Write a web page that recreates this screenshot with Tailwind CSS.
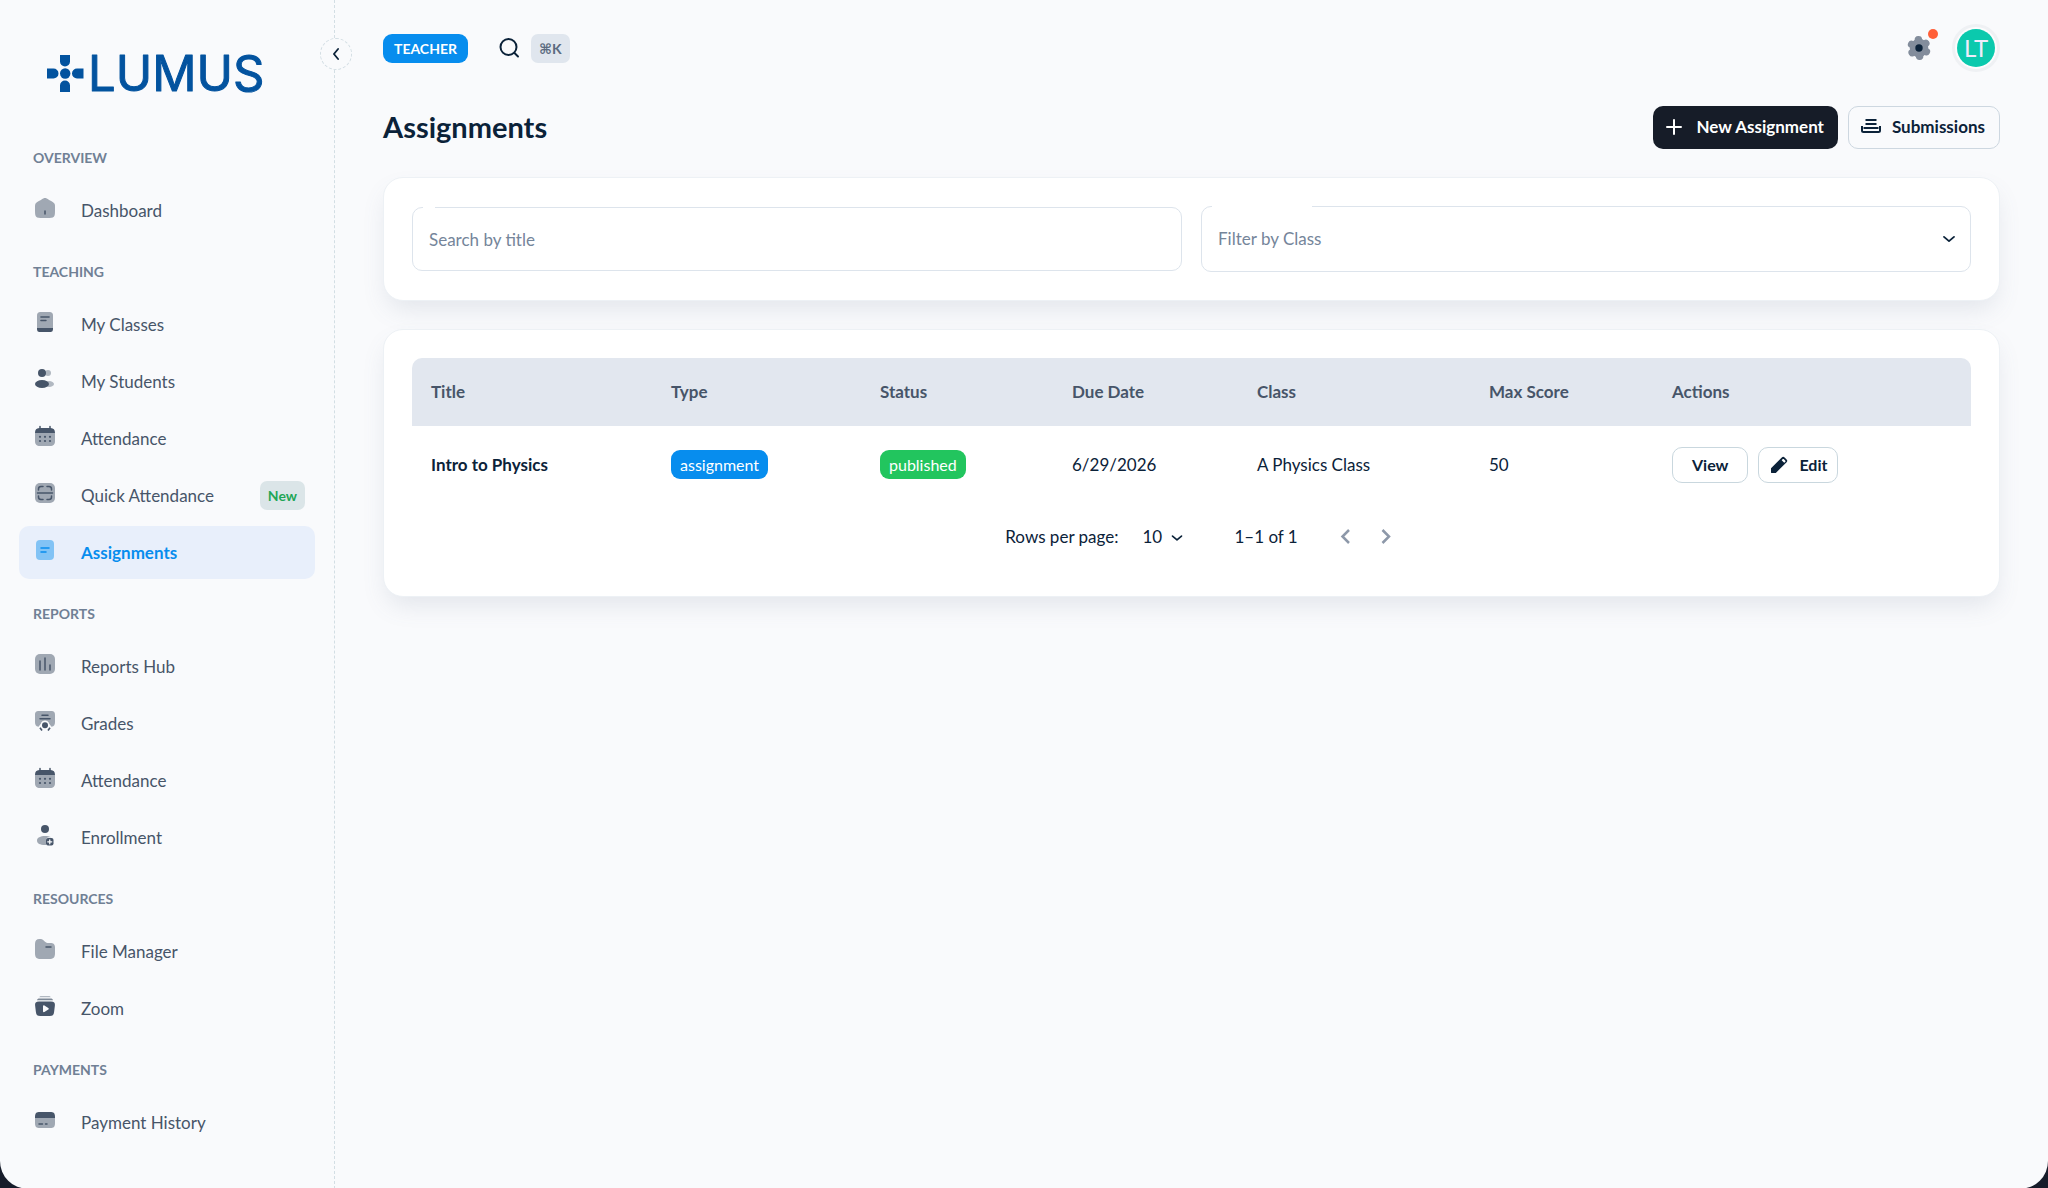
<!DOCTYPE html>
<html lang="en">

<head>
  <meta charset="UTF-8">
  <meta name="viewport" content="width=device-width, initial-scale=1.0">
  <title>Assignments | Lumus</title>
  <script src="https://cdn.jsdelivr.net/npm/@tailwindcss/browser@4"></script>
</head>

<body class="bg-[#161c2a] font-[Lato,sans-serif] text-[17px] leading-6 text-[#0b2239]">
  <!-- shared icon shapes -->
  <svg class="hidden">
    <symbol id="i-calendar" viewBox="0 0 24 24">
      <path d="M2 9h20v8c0 3.500-1.500 5-5 5H7c-3.500 0-5-1.500-5-5z" opacity=".5" />
      <path d="M7 1.700a.75.75 0 0 1 .75.75V4h8.500V2.450a.75.75 0 0 1 1.500 0v1.600C20.600 4.300 22 5.800 22 9H2c0-3.200 1.400-4.700 4.250-4.950v-1.600A.75.75 0 0 1 7 1.700z" />
      <circle cx="7" cy="12.800" r="1.100" /><circle cx="12" cy="12.800" r="1.100" /><circle cx="17" cy="12.800" r="1.100" />
      <circle cx="7" cy="17" r="1.100" /><circle cx="12" cy="17" r="1.100" /><circle cx="17" cy="17" r="1.100" />
    </symbol>
    <symbol id="i-chevron" viewBox="0 0 24 24">
      <path d="M6 9.500l6 5 6-5" fill="none" stroke="currentColor" stroke-width="2.200" stroke-linecap="round" stroke-linejoin="round" />
    </symbol>
  </svg>

  <div class="flex min-h-screen rounded-b-[28px] bg-[#f9fafc]">
    <aside class="relative w-[335px] shrink-0 border-r border-dashed border-[#d3dee4]">
      <button aria-label="Collapse menu"
        class="absolute top-[38px] -right-[18px] flex size-8 items-center justify-center rounded-full border border-dashed border-[#d3dee4] bg-[#f9fafc]">
        <svg class="size-5 rotate-90"><use href="#i-chevron" /></svg>
      </button>

      <a href="#" class="flex h-[123px] items-center pt-6 pl-[46px]" aria-label="Lumus">
        <svg class="h-[70px] w-[240px] overflow-visible" viewBox="0 -10 240 70" fill="#03539f">
          <path d="M14 6h10v6.500a5 5 0 0 1-10 0zM14 43h10v-6.500a5 5 0 0 0-10 0zM1 19.500v10h6.500a5 5 0 0 0 0-10zM37.500 19.500v10H31a5 5 0 0 1 0-10z" />
          <circle cx="19.200" cy="24.500" r="5.200" />
          <text x="42" y="42" font-family="Inter" font-size="49" stroke="#03539f" stroke-width="1" stroke-linejoin="round">LUMUS</text>
        </svg>
      </a>

      <nav class="px-[19px] pb-10 text-[#475569]">
        <h2 class="px-[14px] pt-[25px] pb-4 text-sm leading-5 font-bold text-[#708095]">OVERVIEW</h2>
        <ul class="space-y-1">
          <li><a href="#" class="flex h-[53px] items-center gap-6 rounded-[10px] px-[14px]">
            <span class="pb-[6px]"><svg class="size-6" viewBox="0 0 24 24" fill="currentColor">
              <path d="M2 12.200c0-2.300 0-3.400.5-4.400s1.500-1.500 3.400-2.700l2-1.200C9.900 2.600 10.900 2 12 2s2.100.6 4.100 1.900l2 1.200c1.900 1.200 2.800 1.700 3.400 2.700s.5 2.100.5 4.400v1.500c0 3.900 0 5.900-1.200 7.100S17.800 22 14 22h-4c-3.800 0-5.700 0-6.800-1.200S2 17.600 2 13.700z" opacity=".5" />
              <rect x="11.250" y="14.200" width="1.500" height="4.600" rx=".75" />
            </svg></span>Dashboard</a></li>
        </ul>

        <h2 class="px-[14px] pt-[25px] pb-4 text-sm leading-5 font-bold text-[#708095]">TEACHING</h2>
        <ul class="space-y-1">
          <li><a href="#" class="flex h-[53px] items-center gap-6 rounded-[10px] px-[14px]">
            <span class="pb-[6px]"><svg class="size-6" viewBox="0 0 24 24" fill="currentColor">
              <path d="M4 6c0-3 1-4 4-4h8c3 0 4 1 4 4v12H4z" opacity=".5" />
              <path d="M4 18h16c0 3-.5 4-3 4H7c-2.500 0-3-1-3-4z" />
              <rect x="7.200" y="6.250" width="9.600" height="1.500" rx=".75" /><rect x="7.200" y="9.750" width="6.500" height="1.500" rx=".75" />
            </svg></span>My Classes</a></li>
          <li><a href="#" class="flex h-[53px] items-center gap-6 rounded-[10px] px-[14px]">
            <span class="pb-[6px]"><svg class="size-6" viewBox="0 0 24 24" fill="currentColor">
              <circle cx="15" cy="6" r="3" opacity=".4" />
              <ellipse cx="16" cy="17" rx="5" ry="3" opacity=".4" />
              <circle cx="9" cy="6" r="4" /><ellipse cx="9" cy="17" rx="7" ry="4" />
            </svg></span>My Students</a></li>
          <li><a href="#" class="flex h-[53px] items-center gap-6 rounded-[10px] px-[14px]">
            <span class="pb-[6px]"><svg class="size-6" fill="currentColor"><use href="#i-calendar" /></svg></span>Attendance</a></li>
          <li><a href="#" class="flex h-[53px] items-center gap-6 rounded-[10px] pr-[10px] pl-[14px]">
            <span class="pb-[6px]"><svg class="size-6" viewBox="0 0 24 24" fill="currentColor">
              <rect x="2" y="2" width="20" height="20" rx="5" opacity=".5" />
              <path d="M4.500 12h15M10 5.500H8C6.300 5.500 5.500 6.300 5.500 8v1M14 5.500h2c1.700 0 2.500.8 2.500 2.500v1M10 18.500H8c-1.700 0-2.500-.8-2.500-2.500v-1M14 18.500h2c1.700 0 2.500-.8 2.500-2.500v-1" fill="none" stroke="currentColor" stroke-width="1.500" stroke-linecap="round" />
            </svg></span>Quick Attendance
            <span class="ml-auto rounded-[7px] bg-[#dbe5e8] px-2 py-[5px] text-sm leading-[19px] font-bold text-[#1fa657]">New</span></a></li>
          <li><a href="#" aria-current="page" class="flex h-[53px] items-center gap-6 rounded-[10px] bg-[#e8effb] px-[14px] font-bold text-[#078dee]">
            <span class="pb-[6px]"><svg class="size-6" viewBox="0 0 24 24" fill="currentColor">
              <rect x="3" y="2" width="18" height="20" rx="4" opacity=".45" />
              <rect x="7.250" y="9.250" width="9.500" height="1.500" rx=".75" /><rect x="7.250" y="13.250" width="6.500" height="1.500" rx=".75" />
            </svg></span>Assignments</a></li>
        </ul>

        <h2 class="px-[14px] pt-[25px] pb-4 text-sm leading-5 font-bold text-[#708095]">REPORTS</h2>
        <ul class="space-y-1">
          <li><a href="#" class="flex h-[53px] items-center gap-6 rounded-[10px] px-[14px]">
            <span class="pb-[6px]"><svg class="size-6" viewBox="0 0 24 24" fill="currentColor">
              <rect x="2" y="2" width="20" height="20" rx="5" opacity=".5" />
              <rect x="6.250" y="8.250" width="1.500" height="10.500" rx=".75" /><rect x="11.250" y="5.250" width="1.500" height="13.500" rx=".75" /><rect x="16.250" y="12.250" width="1.500" height="6.500" rx=".75" />
            </svg></span>Reports Hub</a></li>
          <li><a href="#" class="flex h-[53px] items-center gap-6 rounded-[10px] px-[14px]">
            <span class="pb-[6px]"><svg class="size-6" viewBox="0 0 24 24" fill="currentColor">
              <path d="M6 2h12c3 0 4 1 4 4v7c0 2.700-.8 4.500-3.500 4.800L16 14.500a4.200 4.200 0 0 0-8 0l-2.500 3.300C2.800 17.500 2 15.700 2 13V6c0-3 1-4 4-4z" opacity=".5" />
              <rect x="8.250" y="5.500" width="7.500" height="1.500" rx=".75" /><rect x="6.250" y="9" width="11.500" height="1.500" rx=".75" />
              <circle cx="12" cy="16.200" r="4.200" fill="#f9fafc" /><circle cx="12" cy="16.200" r="3" />
              <path d="M7 18.800l2 2.600M17 18.800l-2 2.600" stroke="currentColor" stroke-width="1.700" />
            </svg></span>Grades</a></li>
          <li><a href="#" class="flex h-[53px] items-center gap-6 rounded-[10px] px-[14px]">
            <span class="pb-[6px]"><svg class="size-6" fill="currentColor"><use href="#i-calendar" /></svg></span>Attendance</a></li>
          <li><a href="#" class="flex h-[53px] items-center gap-6 rounded-[10px] px-[14px]">
            <span class="pb-[6px]"><svg class="size-6" viewBox="0 0 24 24" fill="currentColor">
              <circle cx="12" cy="6" r="4" />
              <path d="M13 22h-1c-5 0-8-1.500-8-4.500S7.500 13 12 13c2.500 0 4.700.4 6.200 1.300H16c-2 0-3 1-3 3z" opacity=".5" />
              <rect x="13" y="15" width="7.500" height="7.500" rx="2" />
              <path d="M16.750 16.800v4M14.750 18.800h4" stroke="#f9fafc" stroke-width="1.300" stroke-linecap="round" />
            </svg></span>Enrollment</a></li>
        </ul>

        <h2 class="px-[14px] pt-[25px] pb-4 text-sm leading-5 font-bold text-[#708095]">RESOURCES</h2>
        <ul class="space-y-1">
          <li><a href="#" class="flex h-[53px] items-center gap-6 rounded-[10px] px-[14px]">
            <span class="pb-[6px]"><svg class="size-6" viewBox="0 0 24 24" fill="currentColor">
              <path d="M2 7c0-3.500 1.500-5 4.500-5 2 0 3 .4 4.200 1.500l1.300 1.200C13 5.600 14 6 15.500 6H17c3.500 0 5 1.200 5 4.500V16c0 4.500-1.500 6-6 6H8c-4.500 0-6-1.500-6-6z" opacity=".5" />
              <rect x="12.250" y="9.250" width="6.500" height="1.500" rx=".75" />
            </svg></span>File Manager</a></li>
          <li><a href="#" class="flex h-[53px] items-center gap-6 rounded-[10px] px-[14px]">
            <span class="pb-[6px]"><svg class="size-6" viewBox="0 0 24 24" fill="currentColor">
              <path d="M8.500 2h7c1.300 0 2 .4 2.200 1.300H6.300C6.500 2.400 7.200 2 8.500 2z" opacity=".4" />
              <path d="M6.500 4.500h11c1.500 0 2.300.7 2.500 1.700H4c.2-1 1-1.700 2.500-1.700z" opacity=".7" />
              <path fill-rule="evenodd" d="M6 7.500h12c3 0 4.300 1.200 3.900 4l-.8 6.500c-.4 3-1.500 4-4.300 4H7.200c-2.800 0-3.900-1-4.300-4l-.8-6.500c-.4-2.800.9-4 3.900-4zm4 4.700v5c0 .8.700 1.200 1.400.8l3.900-2.400c.7-.4.7-1.300 0-1.700l-3.900-2.500c-.7-.4-1.400 0-1.400.8z" />
            </svg></span>Zoom</a></li>
        </ul>

        <h2 class="px-[14px] pt-[25px] pb-4 text-sm leading-5 font-bold text-[#708095]">PAYMENTS</h2>
        <ul class="space-y-1">
          <li><a href="#" class="flex h-[53px] items-center gap-6 rounded-[10px] px-[14px]">
            <span class="pb-[6px]"><svg class="size-6" viewBox="0 0 24 24" fill="currentColor">
              <path d="M2 10h20v5c0 3.700-1.200 5-5 5H7c-3.800 0-5-1.300-5-5z" opacity=".5" />
              <path d="M7 4h10c3.800 0 5 1.300 5 5v1H2V9c0-3.700 1.200-5 5-5z" />
              <rect x="5.250" y="15.250" width="5" height="1.500" rx=".75" /><rect x="11.750" y="15.250" width="3" height="1.500" rx=".75" />
            </svg></span>Payment History</a></li>
        </ul>
      </nav>
    </aside>

    <main class="min-w-0 flex-1 px-12">
      <header class="flex h-24 items-center">
        <span class="rounded-[9px] bg-[#078dee] px-[11px] py-[5px] text-sm leading-[19px] font-bold text-white">TEACHER</span>
        <button class="ml-[29px] flex items-center gap-[10px]" aria-label="Search">
          <svg class="size-6" viewBox="0 0 24 24" fill="none" stroke="currentColor" stroke-width="2" stroke-linecap="round">
            <circle cx="11.500" cy="11" r="8" /><path d="M17.500 17l3.500 3.500" />
          </svg>
          <kbd class="rounded-[7px] bg-[#e0e6ee] px-2 py-[5px] font-[Lato,'DejaVu_Sans',sans-serif] text-sm leading-[19px] font-bold text-[#5b6b80]">⌘K</kbd>
        </button>
        <button class="relative ml-auto size-8" aria-label="Settings">
          <svg class="size-8" viewBox="0 0 32 32">
            <g fill="#838d9c" stroke="#838d9c" stroke-width="7.500" stroke-linecap="round" transform="rotate(-4 16 16)">
              <circle cx="16" cy="16" r="5.500" />
              <path d="M16 7.800v16.400M8.900 11.900l14.200 8.200M8.900 20.100l14.200-8.200" />
            </g>
            <circle cx="16" cy="16" r="3.700" fill="#0b2239" />
          </svg>
          <span class="absolute -top-[3px] -right-[3px] size-[10px] rounded-full bg-[#ff5f38]"></span>
        </button>
        <button class="ml-[17px] rounded-full border-3 border-[#eff1f4] bg-[#fcfcfd] p-[2px]" aria-label="Account">
          <span class="flex size-[38px] items-center justify-center rounded-full bg-[#0bc9ad] text-[24px] text-[#eeecfb]">LT</span>
        </button>
      </header>

      <div class="flex items-center gap-[10px] pt-[9px] pb-7">
        <h1 class="mr-auto text-[29px] leading-[44px] font-bold">Assignments</h1>
        <a href="#" class="flex h-[43px] items-center gap-3 rounded-[10px] bg-[#161c28] pr-[14px] pl-[10px] font-bold text-white">
          <svg class="size-[22px]" viewBox="0 0 22 22" stroke="currentColor" stroke-width="2" stroke-linecap="round"><path d="M11 4v14M4 11h14" /></svg>
          New Assignment
        </a>
        <a href="#" class="flex h-[43px] items-center gap-[10px] rounded-[10px] border border-[#cdd7e0] pr-[14px] pl-[11px] font-bold">
          <svg class="size-[22px]" viewBox="0 0 22 22" fill="none" stroke="currentColor" stroke-width="2"><path d="M5.500 4h11M5.500 8h11M3.500 12h15M2 10v4.500c0 1 .5 1.500 1.500 1.500h15c1 0 1.500-.5 1.500-1.500V10" /></svg>
          Submissions
        </a>
      </div>

      <section class="grid grid-cols-2 items-center gap-[19px] rounded-[20px] border border-[#edf1f5] bg-white p-7 shadow-[0_12px_24px_-4px_rgba(100,116,139,0.15)]">
        <div class="relative">
          <input id="title" type="text" class="block h-16 w-full rounded-[10px] border border-[#dde4ec] px-4 outline-none">
          <label for="title" class="absolute top-[21px] left-[17px] text-[#75859a]">Search by title</label>
          <span class="absolute top-0 left-[11px] h-px w-3 bg-white"></span>
        </div>
        <div class="relative">
          <select id="class" class="block h-[66px] w-full appearance-none rounded-[10px] border border-[#dde4ec] px-4 outline-none">
            <option value=""></option>
          </select>
          <label for="class" class="absolute top-[21px] left-[17px] text-[#75859a]">Filter by Class</label>
          <span class="absolute top-0 left-[11px] h-px w-[100px] bg-white"></span>
          <svg class="pointer-events-none absolute top-[23px] right-3 size-5"><use href="#i-chevron" /></svg>
        </div>
      </section>

      <section class="mt-7 rounded-[20px] border border-[#edf1f5] bg-white px-7 pt-7 pb-[25px] shadow-[0_12px_24px_-4px_rgba(100,116,139,0.15)]">
        <table class="w-full table-fixed text-left">
          <thead class="text-[#475569]">
            <tr class="h-[68px] *:bg-[#e2e7ef] *:px-[19px] *:font-bold">
              <th class="w-[240px] rounded-tl-[10px]">Title</th>
              <th class="w-[209px]">Type</th>
              <th class="w-[192px]">Status</th>
              <th class="w-[185px]">Due Date</th>
              <th class="w-[232px]">Class</th>
              <th class="w-[183px]">Max Score</th>
              <th class="w-[318px] rounded-tr-[10px]">Actions</th>
            </tr>
          </thead>
          <tbody>
            <tr class="h-[77px] *:px-[19px]">
              <td class="font-bold">Intro to Physics</td>
              <td><span class="inline-block rounded-[9px] bg-[#078dee] px-[9px] py-1 text-base leading-[21px] text-white">assignment</span></td>
              <td><span class="inline-block rounded-[9px] bg-[#22c55e] px-[9px] py-1 text-base leading-[21px] text-white">published</span></td>
              <td>6/29/2026</td>
              <td>A Physics Class</td>
              <td>50</td>
              <td>
                <div class="flex gap-[10px] text-base font-bold">
                  <button class="h-9 rounded-[10px] border border-[#c9d7de] px-[19px]">View</button>
                  <button class="flex h-9 items-center gap-[10px] rounded-[10px] border border-[#c9d7de] px-[10px]">
                    <svg class="size-5" viewBox="0 0 20 20" fill="currentColor"><path fill-rule="evenodd" d="M2 17.500v-4.300L12.800 2.400c.9-.9 1.900-.9 2.800 0l2 2c.9.9.9 1.900 0 2.800L6.800 18H2.500c-.3 0-.5-.2-.5-.5zM12.700 5.200l2.500 2.600 1.100-1.100c.3-.3.3-.6 0-.9L14.700 4.100c-.3-.3-.6-.3-.9 0z" /></svg>
                    Edit
                  </button>
                </div>
              </td>
            </tr>
          </tbody>
        </table>

        <div class="flex h-[68px] items-center justify-center pl-7">
          <label for="rows">Rows per page:</label>
          <div class="relative ml-6">
            <select id="rows" class="w-11 appearance-none outline-none">
              <option>10</option>
            </select>
            <svg class="pointer-events-none absolute top-1 right-0 size-[18px]"><use href="#i-chevron" /></svg>
          </div>
          <span class="ml-12">1–1 of 1</span>
          <button class="ml-7 flex size-10 items-center justify-center text-[#8d98a9]" aria-label="Previous page" disabled>
            <svg class="size-6" viewBox="0 0 24 24" fill="none" stroke="currentColor" stroke-width="2.500"><path d="M15 5l-6.500 6.500L15 18" /></svg>
          </button>
          <button class="flex size-10 items-center justify-center text-[#8d98a9]" aria-label="Next page" disabled>
            <svg class="size-6" viewBox="0 0 24 24" fill="none" stroke="currentColor" stroke-width="2.500"><path d="M8.500 5l6.500 6.500L8.500 18" /></svg>
          </button>
        </div>
      </section>
    </main>
  </div>
</body>

</html>
